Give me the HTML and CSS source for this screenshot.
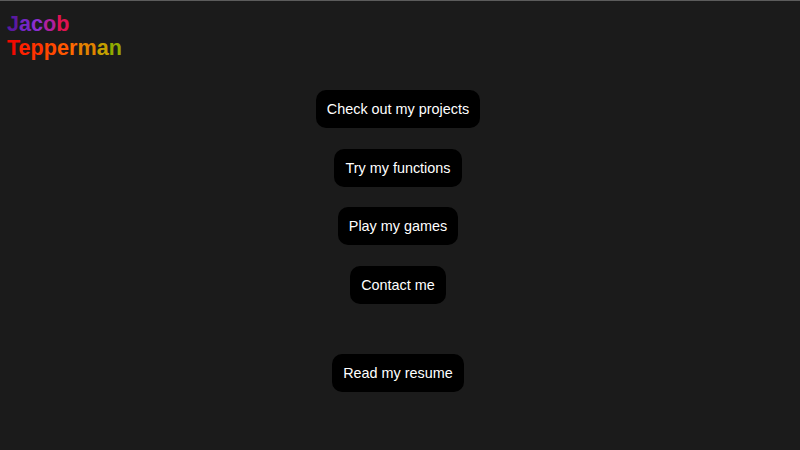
FILE: index.html
```html
<!DOCTYPE html>
<html lang="en">
<head>
<meta charset="utf-8">
<title>Jacob Tepperman</title>
<link rel="stylesheet" href="styles.css">
</head>
<body>
<header class="brand">
  <div class="name-line"><span class="c1">J</span><span class="c2">a</span><span class="c3">c</span><span class="c4">o</span><span class="c5">b</span></div>
  <div class="name-line"><span class="d1">T</span><span class="d2">e</span><span class="d3">p</span><span class="d4">p</span><span class="d5">e</span><span class="d6">r</span><span class="d7">m</span><span class="d8">a</span><span class="d9">n</span></div>
</header>
<main class="menu">
  <a class="btn" href="#">Check out my projects</a>
  <a class="btn" href="#">Try my functions</a>
  <a class="btn" href="#">Play my games</a>
  <a class="btn" href="#">Contact me</a>
  <a class="btn btn-resume" href="#">Read my resume</a>
</main>
</body>
</html>
```
FILE: styles.css
```css
html, body {
  margin: 0;
  padding: 0;
  height: 100%;
}
body {
  background: #1b1b1b;
  border-top: 1px solid #5c5c5c;
  box-sizing: border-box;
  font-family: "Liberation Sans", Arial, sans-serif;
  overflow: hidden;
}
.brand {
  padding: 11px 0 0 7px;
  font-weight: bold;
  font-size: 21.6px;
  line-height: 24px;
}
.c1 { color: #5a1aa0; }
.c2 { color: #7526c4; }
.c3 { color: #8a2ed0; }
.c4 { color: #b0209e; }
.c5 { color: #e01252; }
.d1 { color: #f20a00; }
.d2 { color: #ff2200; }
.d3 { color: #ff3300; }
.d4 { color: #ff4800; }
.d5 { color: #ff5700; }
.d6 { color: #ff6a00; }
.d7 { color: #e28200; }
.d8 { color: #c4a000; }
.d9 { color: #92aa00; }
.menu {
  display: flex;
  flex-direction: column;
  align-items: center;
  gap: 20.5px;
  margin-top: 30px;
  padding-right: 4px;
}
.btn {
  display: flex;
  align-items: center;
  height: 38px;
  padding: 0 11px;
  background: #000;
  color: #fff;
  border-radius: 10px;
  font-size: 14.4px;
  text-decoration: none;
}
.btn-resume {
  margin-top: 30px;
}
```
